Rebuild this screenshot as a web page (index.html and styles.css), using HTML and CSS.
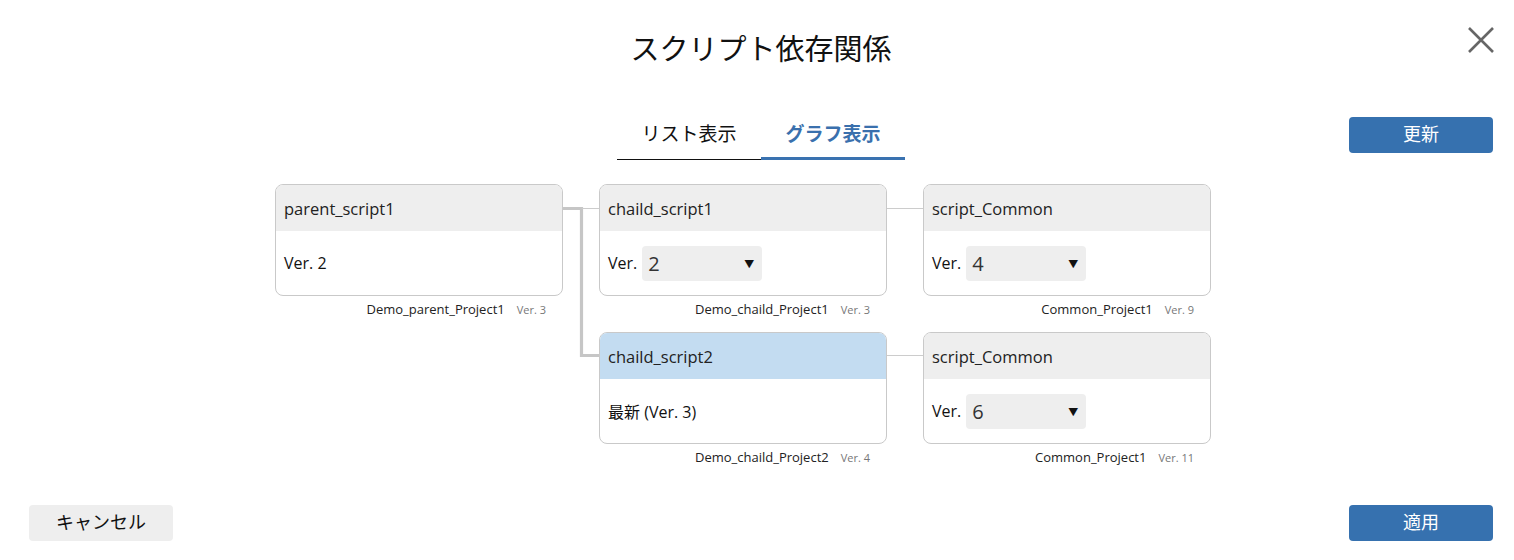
FILE: index.html
```html
<!DOCTYPE html>
<html lang="ja">
<head>
<meta charset="utf-8">
<title>スクリプト依存関係</title>
<link rel="stylesheet" href="styles.css">
</head>
<body>
<div class="page">
  <header class="header">
    <div></div>
    <h1 class="title">スクリプト依存関係</h1>
    <button class="close" aria-label="閉じる">
      <svg width="26" height="26" viewBox="0 0 26 26"><path d="M1 1 L25 25 M25 1 L1 25" stroke="#666" stroke-width="2.6" fill="none"/></svg>
    </button>
  </header>

  <div class="tabrow">
    <div></div>
    <div class="tabs">
      <div class="tab">リスト表示</div>
      <div class="tab active">グラフ表示</div>
    </div>
    <div class="tabrow-right"><button class="btn primary">更新</button></div>
  </div>

  <div class="graph">
    <svg class="edges" width="936" height="296" viewBox="0 0 936 296">
      <path d="M288 24.5 H306.5 V171.5 H324" stroke="#c6c6c6" stroke-width="3.2" fill="none"/>
      <path d="M306.5 24.5 H324" stroke="#cccccc" stroke-width="1" fill="none"/>
      <path d="M612 24.5 H648" stroke="#cccccc" stroke-width="1" fill="none"/>
      <path d="M612 171.5 H648" stroke="#cccccc" stroke-width="1" fill="none"/>
    </svg>

    <div class="node">
      <div class="card">
        <div class="card-head">parent_script1</div>
        <div class="card-body">Ver. 2</div>
      </div>
      <div class="meta"><span class="proj">Demo_parent_Project1</span><span class="pver">Ver. 3</span></div>
    </div>

    <div class="node">
      <div class="card">
        <div class="card-head">chaild_script1</div>
        <div class="card-body">Ver.<div class="select"><span>2</span><span class="arrow">▼</span></div></div>
      </div>
      <div class="meta"><span class="proj">Demo_chaild_Project1</span><span class="pver">Ver. 3</span></div>
    </div>

    <div class="node">
      <div class="card">
        <div class="card-head">script_Common</div>
        <div class="card-body">Ver.<div class="select"><span>4</span><span class="arrow">▼</span></div></div>
      </div>
      <div class="meta"><span class="proj">Common_Project1</span><span class="pver">Ver. 9</span></div>
    </div>

    <div class="node empty"></div>

    <div class="node">
      <div class="card">
        <div class="card-head selected">chaild_script2</div>
        <div class="card-body">最新 (Ver. 3)</div>
      </div>
      <div class="meta"><span class="proj">Demo_chaild_Project2</span><span class="pver">Ver. 4</span></div>
    </div>

    <div class="node">
      <div class="card">
        <div class="card-head">script_Common</div>
        <div class="card-body">Ver.<div class="select"><span>6</span><span class="arrow">▼</span></div></div>
      </div>
      <div class="meta"><span class="proj">Common_Project1</span><span class="pver">Ver. 11</span></div>
    </div>
  </div>

  <footer class="footer">
    <button class="btn secondary">キャンセル</button>
    <button class="btn primary">適用</button>
  </footer>
</div>
</body>
</html>
```
FILE: styles.css
```css
* { box-sizing: border-box; }
html, body { margin: 0; padding: 0; background: #fff; }
body {
  font-family: "Open Sans", "Noto Sans CJK JP", sans-serif;
  color: #222;
  width: 1514px;
  height: 560px;
  overflow: hidden;
}
.page {
  padding: 0 21px 0 29px;
}
.header {
  display: grid;
  grid-template-columns: 1fr auto 1fr;
  align-items: start;
  height: 117px;
}
.title {
  margin: 27px 0 0;
  font-size: 29px;
  line-height: 40px;
  font-weight: 400;
  color: #111;
  font-family: "Noto Sans CJK JP", sans-serif;
}
.close {
  justify-self: end;
  margin-top: 27px;
  margin-right: -1px;
  width: 26px;
  height: 26px;
  padding: 0;
  border: 0;
  background: none;
  display: block;
}
.close svg { display: block; }

.tabrow {
  display: grid;
  grid-template-columns: 1fr auto 1fr;
  align-items: start;
  height: 43px;
}
.tabs { display: flex; }
.tab {
  width: 144px;
  height: 43px;
  display: flex;
  align-items: flex-start;
  justify-content: center;
  padding-top: 2px;
  font-family: "Noto Sans CJK JP", sans-serif;
  font-size: 19px;
  line-height: 28px;
  color: #111;
  border-bottom: 1px solid #111;
}
.tab.active {
  color: #3a70ad;
  font-weight: 700;
  border-bottom: 3px solid #3a72b0;
}
.tabrow-right { display: flex; justify-content: flex-end; }

.btn {
  width: 144px;
  height: 36px;
  border: 0;
  border-radius: 4px;
  font-family: "Noto Sans CJK JP", sans-serif;
  font-size: 18px;
  padding: 0 0 4px;
  line-height: 32px;
  display: flex;
  align-items: center;
  justify-content: center;
}
.btn.primary { background: #3671af; color: #fff; }
.btn.secondary { background: #eeeeee; color: #111; }

.graph {
  position: relative;
  margin: 24px 0 0 246px;
  width: 936px;
  display: grid;
  grid-template-columns: repeat(3, 288px);
  column-gap: 36px;
}
.edges {
  position: absolute;
  left: 0;
  top: 0;
  pointer-events: none;
}
.node { height: 148px; position: relative; }
.card {
  position: relative;
  height: 112px;
  border: 1px solid #c9c9c9;
  border-radius: 8px;
  overflow: hidden;
  background: #fff;
}
.card-head {
  height: 46px;
  background: #eeeeee;
  display: flex;
  align-items: center;
  padding-left: 8px;
  font-size: 16.5px;
  color: #222;
}
.card-head.selected { background: #c3dcf1; }
.card-body {
  height: 64px;
  display: flex;
  align-items: center;
  padding-left: 8px;
  font-size: 16px;
  color: #111;
  gap: 5px;
}
.select {
  width: 120px;
  height: 35px;
  background: #eeeeee;
  border-radius: 4px;
  display: flex;
  align-items: center;
  justify-content: space-between;
  padding: 0 8px 0 6px;
  font-size: 20px;
  color: #333;
}
.select .arrow { font-size: 10px; color: #111; }
.meta {
  display: flex;
  justify-content: flex-end;
  align-items: baseline;
  gap: 12px;
  padding: 3px 17px 0 0;
  line-height: 20px;
}
.proj { font-size: 13px; color: #222; }
.pver { font-size: 11px; color: #777; }

.footer {
  margin-top: 25px;
  display: flex;
  justify-content: space-between;
}
```
